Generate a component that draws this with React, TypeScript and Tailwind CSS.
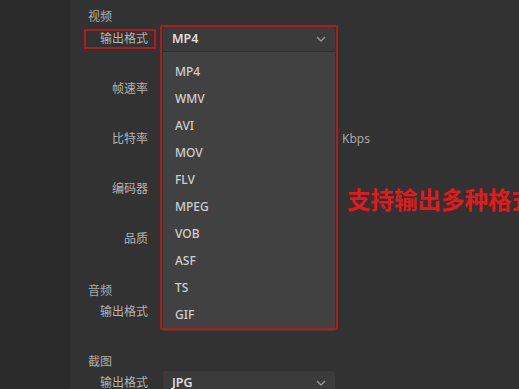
const formats = ["MP4", "WMV", "AVI", "MOV", "FLV", "MPEG", "VOB", "ASF", "TS", "GIF"]

const Chevron = () => (
    <svg width="10" height="6" viewBox="0 0 10 6" className="text-[#9a9a9a]">
        <path d="M1 1 L5 5 L9 1" fill="none" stroke="currentColor" strokeWidth="1.3" />
    </svg>
)

type RowProps = {
    label: string,
    className?: string,
    children?: React.ReactNode,
    marked?: boolean
}

const Row = ({ label, className, children, marked }: RowProps) => {
    return (
        <div className={"flex items-center h-6 " + (className ?? "")}>
            <div className="relative w-[60px] text-right text-[12px] text-[#b4b4b4] shrink-0">
                {label}
                {marked && (
                    <div className="absolute -left-[4px] -right-[8px] -top-[1px] h-[20px] border-2 border-[#b01c1c]"></div>
                )}
            </div>
            <div className="ml-[15px] flex items-center">{children}</div>
        </div>
    )
}

const Select = ({ value }: { value: string }) => {
    return (
        <div className="w-[172px] h-6 bg-[#3b3b3b] rounded-[3px] flex items-center justify-between pl-[9px] pr-[9px]">
            <span className="text-[12.5px] font-semibold text-[#dedede]">{value}</span>
            <Chevron />
        </div>
    )
}

const Header = ({ title, className }: { title: string, className?: string }) => (
    <div className={"h-4 leading-4 text-[12px] text-[#acacac] " + (className ?? "")}>{title}</div>
)

export default function App() {
    return (
        <div className="w-[519px] h-[389px] overflow-hidden flex bg-[#323232]" style={{ fontFamily: '"Noto Sans", "Noto Sans CJK SC", sans-serif' }}>
            <div className="w-[70px] shrink-0 bg-[#2a2a2a]"></div>
            <div className="relative flex-1 pl-[18px] pt-[9px] overflow-hidden">
                <Header title="视频" />
                <Row label="输出格式" className="mt-[2px]" marked>
                    <div className="relative">
                        <Select value="MP4" />
                        <div className="absolute left-0 top-[24px] w-[172px] h-[280px] bg-[#414141] border-t border-[#2e2e2e] pt-[6px]">
                            {formats.map((f, i) => (
                                <div key={`fmt-${i}`} className="h-[27px] flex items-center pl-[12px] text-[12px] font-medium text-[#cfcfcf]">{f}</div>
                            ))}
                        </div>
                        <div className="absolute -left-[3px] -top-[2px] w-[178px] h-[305px] border-[2.5px] border-[#b01c1c] rounded-[2px]"></div>
                    </div>
                </Row>
                <Row label="帧速率" className="mt-[26px]" />
                <Row label="比特率" className="mt-[26px]">
                    <div className="w-[172px]"></div>
                    <span className="ml-[7px] text-[12px] text-[#a8a8a8]">Kbps</span>
                </Row>
                <Row label="编码器" className="mt-[26px]" />
                <Row label="品质" className="mt-[26px]" />
                <Header title="音频" className="mt-[32px]" />
                <Row label="输出格式" className="mt-[1px]" />
                <Header title="截图" className="mt-[30px]" />
                <Row label="输出格式" className="mt-[1px]">
                    <Select value="JPG" />
                </Row>
                <div className="absolute left-[277px] top-[186px] text-[23.5px] leading-[28px] font-bold text-[#e3191b] whitespace-nowrap">支持输出多种格式</div>
            </div>
        </div>
    )
}
